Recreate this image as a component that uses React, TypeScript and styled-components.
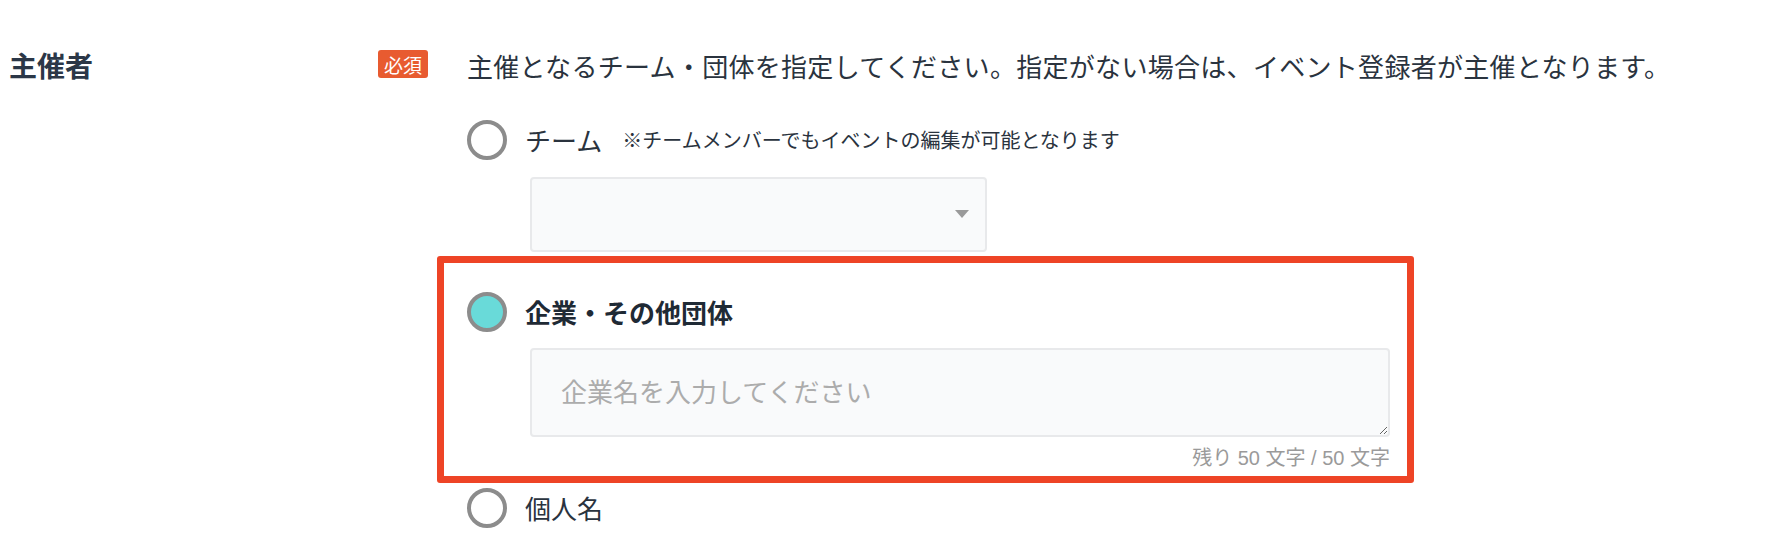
import styled, { createGlobalStyle } from "styled-components";

const GlobalStyle = createGlobalStyle`
  html, body {
    margin: 0;
    padding: 0;
    background: #ffffff;
  }
  body {
    font-family: "Noto Sans CJK JP", "Noto Sans", sans-serif;
    color: #2a333e;
  }
`;

interface OptionProps {
  label: string;
  checked?: boolean;
  bold?: boolean;
  note?: string;
}

function RadioOption(props: OptionProps) {
  return (
    <OptionRow>
      <RadioDot $checked={!!props.checked} />
      <OptionLabel $bold={!!props.bold}>{props.label}</OptionLabel>
      {props.note && <OptionNote>{props.note}</OptionNote>}
    </OptionRow>
  );
}

export default function App() {
  const maxLength = 50;
  const companyName = "";

  return (
    <>
      <GlobalStyle />
      <Page>
        <FieldRow>
          <FieldLabel>主催者</FieldLabel>
          <BadgeCell>
            <RequiredBadge>必須</RequiredBadge>
          </BadgeCell>
          <FieldBody>
            <Description>
              主催となるチーム・団体を指定してください。指定がない場合は、イベント登録者が主催となります。
            </Description>

            <OptionList>
              <RadioOption label="チーム" note="※チームメンバーでもイベントの編集が可能となります" />
              <SelectBox>
                <SelectArrow />
              </SelectBox>

              <Highlight>
                <RadioOption label="企業・その他団体" checked bold />
                <NameInput placeholder="企業名を入力してください" maxLength={maxLength} defaultValue={companyName} />
                <Counter>
                  残り {maxLength - companyName.length} 文字 / {maxLength} 文字
                </Counter>
              </Highlight>

              <PersonalRow>
                <RadioOption label="個人名" />
              </PersonalRow>
            </OptionList>
          </FieldBody>
        </FieldRow>
      </Page>
    </>
  );
}

const Page = styled.div`
  width: 1786px;
  height: 558px;
  box-sizing: border-box;
  padding: 48px 8px 0;
  overflow: hidden;
`;

const FieldRow = styled.div`
  display: grid;
  grid-template-columns: 370px 89px 1fr;
  align-items: start;
`;

const FieldLabel = styled.div`
  padding: 3px 0 0 1px;
  font-size: 28px;
  line-height: 28px;
  font-weight: 700;
  color: #2b3747;
`;

const BadgeCell = styled.div`
  padding-top: 2px;
`;

const RequiredBadge = styled.span`
  display: inline-flex;
  align-items: center;
  justify-content: center;
  width: 50px;
  height: 28px;
  border-radius: 3px;
  background: #e85b30;
  color: #ffffff;
  font-size: 19px;
  line-height: 1;
`;

const FieldBody = styled.div`
  display: flex;
  flex-direction: column;
`;

const Description = styled.p`
  margin: 0;
  font-size: 26px;
  line-height: 36px;
  letter-spacing: 0.3px;
  color: #2a333e;
  white-space: nowrap;
`;

const OptionList = styled.div`
  display: flex;
  flex-direction: column;
  align-items: flex-start;
  margin-top: 36px;
`;

const OptionRow = styled.div`
  display: flex;
  align-items: center;
  height: 40px;
`;

const RadioDot = styled.span<{ $checked: boolean }>`
  width: 40px;
  height: 40px;
  box-sizing: border-box;
  border-radius: 50%;
  border: 4px solid #8c8c8c;
  background: ${(p) => (p.$checked ? "#69dad9" : "#ffffff")};
  flex-shrink: 0;
`;

const OptionLabel = styled.span<{ $bold: boolean }>`
  margin-left: 18px;
  font-size: 26px;
  line-height: 36px;
  font-weight: ${(p) => (p.$bold ? 700 : 400)};
  color: ${(p) => (p.$bold ? "#1f2a35" : "#2a333e")};
`;

const OptionNote = styled.span`
  margin-left: 20px;
  font-size: 20px;
  line-height: 28px;
  color: #2a333e;
`;

const SelectBox = styled.div`
  display: flex;
  align-items: center;
  justify-content: flex-end;
  width: 457px;
  height: 75px;
  box-sizing: border-box;
  margin: 17px 0 0 63px;
  padding-right: 16px;
  border: 2px solid #e8e9eb;
  border-radius: 4px;
  background: #f9fafb;
`;

const SelectArrow = styled.span`
  width: 0;
  height: 0;
  border-left: 7px solid transparent;
  border-right: 7px solid transparent;
  border-top: 8px solid #9a9a9a;
  margin-top: -2px;
`;

const Highlight = styled.div`
  display: flex;
  flex-direction: column;
  width: 977px;
  box-sizing: border-box;
  margin: 4px 0 0 -30px;
  padding: 29px 17px 6px 23px;
  border: 7px solid #ee4426;
  border-radius: 3px;
`;

const NameInput = styled.textarea`
  display: block;
  width: 860px;
  height: 89px;
  box-sizing: border-box;
  margin: 16px 0 0 63px;
  padding: 23px 29px;
  border: 2px solid #e8e9eb;
  border-radius: 4px;
  background: #f9fafb;
  font-family: "Noto Sans CJK JP", "Noto Sans", sans-serif;
  font-size: 26px;
  line-height: 36px;
  color: #2a333e;
  resize: vertical;
  outline: none;

  &::placeholder {
    color: #acacac;
  }
`;

const Counter = styled.div`
  width: 860px;
  margin: 9px 0 0 63px;
  text-align: right;
  font-family: "Liberation Sans", "Noto Sans CJK JP", sans-serif;
  font-size: 20px;
  line-height: 24px;
  color: #9a9a9a;
`;

const PersonalRow = styled.div`
  margin-top: 5px;
`;
